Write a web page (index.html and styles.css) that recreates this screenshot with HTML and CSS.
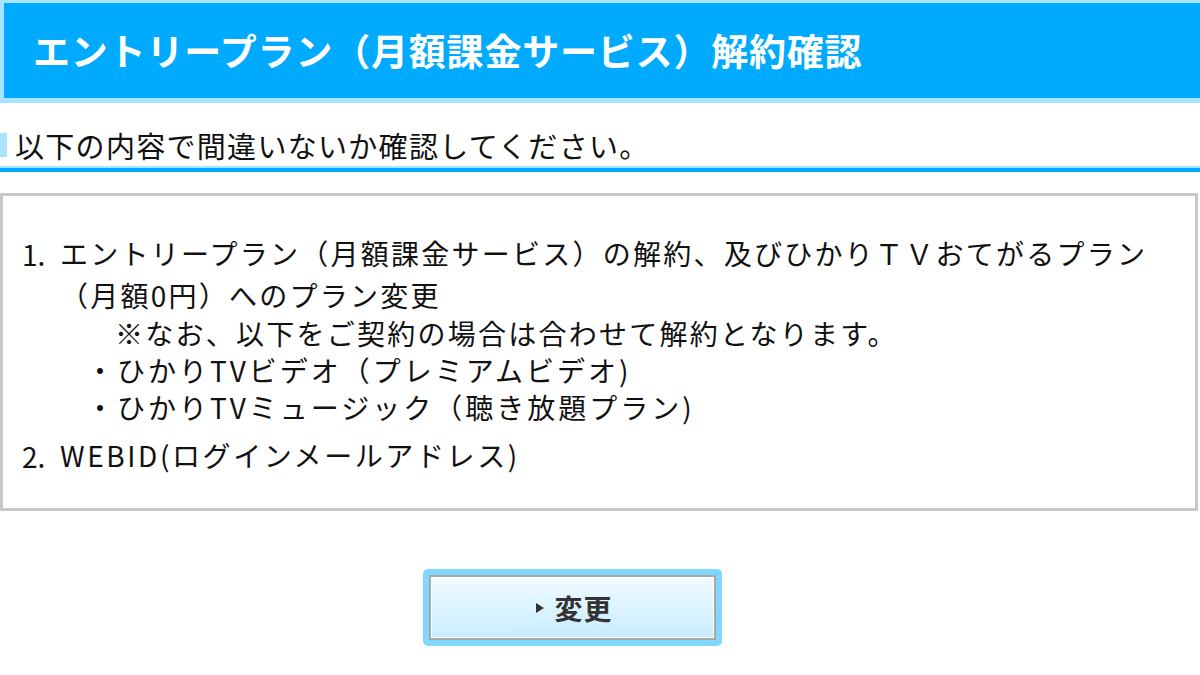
FILE: index.html
```html
<!DOCTYPE html>
<html lang="ja">
<head>
<meta charset="utf-8">
<title>解約確認</title>
<link rel="stylesheet" href="styles.css">
</head>
<body>
<header class="page-head">
  <h1 class="page-title">エントリープラン（月額課金サービス）解約確認</h1>
</header>
<h2 class="sub-head">以下の内容で間違いないか確認してください。</h2>
<section class="confirm-box">
  <ol class="confirm-list">
    <li class="confirm-item">
      <span class="num">1.</span>
      <div class="item-body">
        <p class="line first">エントリープラン（月額課金サービス）の解約、及びひかりＴＶおてがるプラン</p>
        <p class="line">（月額0円）へのプラン変更</p>
        <p class="line note">※なお、以下をご契約の場合は合わせて解約となります。</p>
        <p class="line bullet">・ひかりTVビデオ（プレミアムビデオ)</p>
        <p class="line bullet">・ひかりTVミュージック（聴き放題プラン)</p>
      </div>
    </li>
    <li class="confirm-item second">
      <span class="num">2.</span>
      <div class="item-body">
        <p class="line">WEBID(ログインメールアドレス)</p>
      </div>
    </li>
  </ol>
</section>
<div class="actions">
  <button class="change-btn" type="button"><span class="tri"></span>変更</button>
</div>
</body>
</html>
```
FILE: styles.css
```css
html, body {
  margin: 0;
  padding: 0;
  background: #ffffff;
}
body {
  width: 1200px;
  height: 675px;
  overflow: hidden;
  font-family: "Noto Sans CJK JP", "Noto Sans", sans-serif;
  color: #111111;
}
.page-head {
  box-sizing: border-box;
  height: 103px;
  border-top: 3px solid #a8e4ff;
  border-left: 4px solid #a8e4ff;
  border-bottom: 5px solid #a8e4ff;
  background: #00aaff;
  display: flex;
  align-items: center;
  padding-left: 29px;
}
.page-title {
  margin: 0;
  color: #ffffff;
  font-size: 37px;
  font-weight: 700;
  letter-spacing: 0.8px;
  line-height: 1;
}
.sub-head {
  margin: 22px 0 0 0;
  height: 48px;
  box-sizing: border-box;
  font-size: 29px;
  font-weight: 400;
  line-height: 40px;
  padding-left: 15px;
  letter-spacing: 1.3px;
  color: #111;
  background:
    linear-gradient(#a8e4ff, #a8e4ff) left 8px / 7px 24px no-repeat,
    linear-gradient(#a8e4ff, #a8e4ff) left 41px / 100% 2px no-repeat,
    linear-gradient(#00aaff, #00aaff) left 43px / 100% 4px no-repeat;
}
.confirm-box {
  margin-top: 20px;
  width: 1198px;
  box-sizing: border-box;
  height: 318px;
  border: 3px solid #c8c8c8;
  padding-top: 38px;
}
.confirm-list {
  list-style: none;
  margin: 0;
  padding: 0 0 0 19px;
  font-size: 28px;
  letter-spacing: 2.25px;
}
.confirm-item {
  display: flex;
}
.confirm-item.second {
  margin-top: 10px;
}
.num {
  width: 38px;
  flex: none;
  line-height: 40px;
  letter-spacing: 0;
}
.item-body {
  flex: 1;
}
.line {
  margin: 0;
  line-height: 38px;
  white-space: nowrap;
}
.line.first {
  margin-bottom: 4px;
}
.line.note {
  padding-left: 55px;
}
.line.bullet {
  padding-left: 26px;
  letter-spacing: 3px;
  line-height: 37px;
}
.second .line {
  letter-spacing: 2.6px;
}
.actions {
  display: flex;
  justify-content: center;
  padding-top: 58px;
  padding-right: 55px;
}
.change-btn {
  width: 299px;
  height: 77px;
  box-sizing: border-box;
  border: 6px solid #80d8ff;
  border-radius: 5px;
  padding: 0 0 0 4px;
  background: linear-gradient(#f2fbff, #c6ecff);
  box-shadow: inset 0 0 0 2px #a8a8a8, inset 0 0 0 3px #ffffff;
  font-family: "Noto Sans CJK JP", sans-serif;
  font-size: 28px;
  font-weight: 700;
  color: #333333;
  display: flex;
  align-items: center;
  justify-content: center;
  gap: 10px;
  letter-spacing: 1px;
}
.tri {
  width: 0;
  height: 0;
  border-top: 5px solid transparent;
  border-bottom: 5px solid transparent;
  border-left: 8px solid #333333;
}
```
